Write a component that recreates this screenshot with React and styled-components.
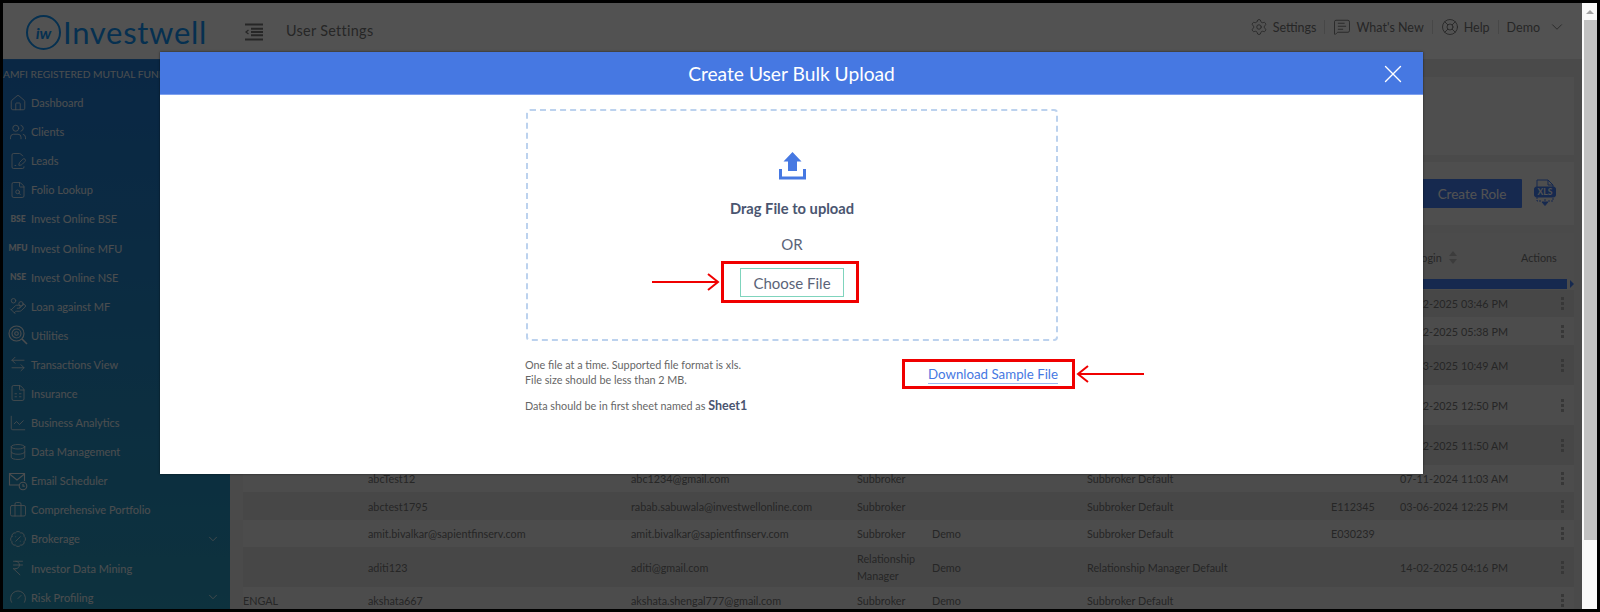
import React from "react";
import styled, { createGlobalStyle } from "styled-components";
import {
  Home,
  Users,
  FileSignature,
  FileSearch,
  HandCoins,
  ArrowLeftRight,
  FileSpreadsheet,
  LineChart,
  Database,
  Briefcase,
  BadgePercent,
  IndianRupee,
  Gauge,
  ChevronDown,
  Settings,
  MessageSquareText,
  LifeBuoy,
  X
} from "lucide-react";

const UtilitiesIcon = (props) => (
  <svg width="20" height="20" viewBox="0 0 20 20" fill="none" stroke="currentColor" strokeWidth="0.9" {...props}>
    <circle cx="8.5" cy="8.5" r="7.5" />
    <circle cx="8.5" cy="8.5" r="4.5" />
    <circle cx="8.5" cy="8.5" r="1.8" />
    <path d="m14 14 5 5" strokeWidth="1.6" />
  </svg>
);

const MailClockIcon = (props) => (
  <svg width="20" height="20" viewBox="0 0 20 20" fill="none" stroke="currentColor" strokeWidth="0.9" {...props}>
    <path d="M11 14H1.5V2.5h15V10" />
    <path d="m1.5 3 7.5 6 7.5-6" />
    <circle cx="15" cy="15" r="3.8" />
    <path d="M15 13v2.2h1.8" />
  </svg>
);

const menu = [
  { label: "Dashboard", icon: Home },
  { label: "Clients", icon: Users },
  { label: "Leads", icon: FileSignature },
  { label: "Folio Lookup", icon: FileSearch },
  { label: "Invest Online BSE", tag: "BSE" },
  { label: "Invest Online MFU", tag: "MFU" },
  { label: "Invest Online NSE", tag: "NSE" },
  { label: "Loan against MF", icon: HandCoins },
  { label: "Utilities", icon: UtilitiesIcon },
  { label: "Transactions View", icon: ArrowLeftRight },
  { label: "Insurance", icon: FileSpreadsheet },
  { label: "Business Analytics", icon: LineChart },
  { label: "Data Management", icon: Database },
  { label: "Email Scheduler", icon: MailClockIcon },
  { label: "Comprehensive Portfolio", icon: Briefcase },
  { label: "Brokerage", icon: BadgePercent, more: true },
  { label: "Investor Data Mining", icon: IndianRupee },
  { label: "Risk Profiling", icon: Gauge, more: true }
];

const rows = [
  { h: 27, date: "12-02-2025 03:46 PM" },
  { h: 28, date: "12-02-2025 05:38 PM" },
  { h: 40, date: "11-03-2025 10:49 AM" },
  { h: 40, date: "12-02-2025 12:50 PM" },
  { h: 40, date: "12-02-2025 11:50 AM" },
  {
    h: 27,
    user: "abcTest12",
    mail: "abc1234@gmail.com",
    type: "Subbroker",
    role: "Subbroker Default",
    date: "07-11-2024 11:03 AM"
  },
  {
    h: 28,
    user: "abctest1795",
    mail: "rabab.sabuwala@investwellonline.com",
    type: "Subbroker",
    role: "Subbroker Default",
    code: "E112345",
    date: "03-06-2024 12:25 PM"
  },
  {
    h: 27,
    user: "amit.bivalkar@sapientfinserv.com",
    mail: "amit.bivalkar@sapientfinserv.com",
    type: "Subbroker",
    branch: "Demo",
    role: "Subbroker Default",
    code: "E030239"
  },
  {
    h: 40,
    user: "aditi123",
    mail: "aditi@gmail.com",
    type: "Relationship Manager",
    branch: "Demo",
    role: "Relationship Manager Default",
    date: "14-02-2025 04:16 PM"
  },
  {
    h: 27,
    name: "ENGAL",
    user: "akshata667",
    mail: "akshata.shengal777@gmail.com",
    type: "Subbroker",
    branch: "Demo",
    role: "Subbroker Default"
  }
];

const GlobalStyle = createGlobalStyle`
  html, body {
    margin: 0;
    padding: 0;
    background: #000;
    font-family: "Lato", "Liberation Sans", sans-serif;
  }
  * {
    box-sizing: border-box;
  }
`;

const Frame = styled.div`
  width: 1600px;
  height: 612px;
  padding: 3px;
  background: #000;
`;

const Screen = styled.div`
  position: relative;
  display: flex;
  width: 100%;
  height: 100%;
  overflow: hidden;
  background: #fff;
`;

const Page = styled.div`
  position: relative;
  flex: 1;
  display: flex;
  flex-direction: column;
  min-width: 0;
`;

const Scrollbar = styled.div`
  width: 15px;
  display: flex;
  flex-direction: column;
  background: #fafafa;
`;

const ScrollArrow = styled.div`
  height: 17px;
  display: flex;
  justify-content: center;
  align-items: center;

  &::before {
    content: "";
    border-left: 4px solid transparent;
    border-right: 4px solid transparent;
    border-bottom: 4px solid #a3a3a3;
  }
`;

const ScrollThumb = styled.div`
  height: 520px;
  margin-left: 2px;
  background: #c1c1c1;
`;

const Header = styled.header`
  height: 56px;
  flex-shrink: 0;
  display: flex;
  align-items: center;
  padding: 0 16px 0 23px;
  background: #fff;
  color: #777;
`;

const Logo = styled.div`
  display: flex;
  align-items: center;
  width: 218px;
  margin-top: 2px;
  color: #1396f7;
`;

const LogoMark = styled.div`
  width: 35px;
  height: 35px;
  margin-right: 2px;
  flex-shrink: 0;
  display: flex;
  align-items: center;
  justify-content: center;
  border: 2.5px solid #1396f7;
  border-radius: 50%;
  font-size: 16px;
  font-weight: 700;
  font-style: italic;
`;

const LogoName = styled.div`
  font-size: 31px;
  letter-spacing: 0.7px;
`;

const Toggle = styled.svg`
  margin-top: 2px;
  flex-shrink: 0;
`;

const PageTitle = styled.div`
  margin: 0 0 2px 22px;
  font-size: 14.4px;
  letter-spacing: 0.3px;
`;

const HeaderLinks = styled.div`
  margin: 0 0 8px auto;
  display: flex;
  align-items: center;
  font-size: 12.5px;
`;

const HeaderLink = styled.div`
  display: flex;
  align-items: center;
  gap: 5px;
  padding: ${(p) => (p.$last ? "0 0 0 8px" : "0 8px")};
  height: 14px;
  border-right: ${(p) => (p.$last ? "none" : "1px solid #ddd")};
`;

const Body = styled.div`
  flex: 1;
  display: flex;
  min-height: 0;
`;

const Sidebar = styled.nav`
  width: 227px;
  flex-shrink: 0;
  background: linear-gradient(180deg, #1f7ad4, #2a9bc0);
  color: #e8f0f5;
  border-top: 1px solid #2f86dd;
`;

const Amfi = styled.div`
  height: 28px;
  padding-top: 6px;
  font-size: 10.2px;
  line-height: 16px;
  white-space: nowrap;
`;

const MenuRow = styled.div`
  height: 29.1px;
  display: flex;
  align-items: center;
  padding: 0 10px 0 5px;
  font-size: 11px;
`;

const MenuIcon = styled.div`
  width: 20px;
  margin-right: 3px;
  display: flex;
  justify-content: center;
  font-size: 8.5px;
  font-weight: 900;
`;

const MenuLabel = styled.span`
  flex: 1;
`;

const Main = styled.main`
  flex: 1;
  min-width: 0;
  display: flex;
  flex-direction: column;
  padding: 18px 0 0 13px;
  background: #e6e6e6;
`;

const InfoCard = styled.div`
  height: 78px;
  flex-shrink: 0;
  margin-bottom: 7px;
  width: 1331px;
  background: #f2f2f2;
`;

const Toolbar = styled.div`
  height: 63px;
  flex-shrink: 0;
  width: 1331px;
  margin-bottom: 1px;
  display: flex;
  justify-content: flex-end;
  align-items: flex-start;
  gap: 12px;
  padding: 17px 18px 0 0;
  background: #f2f2f2;
`;

const CreateRole = styled.div`
  width: 100px;
  height: 29px;
  display: flex;
  align-items: center;
  justify-content: center;
  background: #4680f5;
  border-radius: 1px;
  color: #fff;
  font-size: 13.5px;
`;

const Table = styled.div`
  width: 1331px;
  padding-top: 7px;
  font-size: 10.8px;
  color: #777;
`;

const Grid = styled.div`
  display: grid;
  grid-template-columns: 125px 263px 226px 75px 155px 244px 69px 150px 24px;
  align-items: center;
`;

const HeadRow = styled(Grid)`
  height: 46px;
  padding-top: 2px;
  background: #e8e8e8;
`;

const StripRow = styled.div`
  display: flex;
  align-items: center;
  gap: 3px;
  height: 11px;
  padding-bottom: 1px;
  background: #e8e8e8;
`;

const Strip = styled.div`
  flex: 1;
  height: 10px;
  background: #4680f5;
`;

const StripArrow = styled.div`
  border-top: 4px solid transparent;
  border-bottom: 4px solid transparent;
  border-left: 4px solid #4680f5;
`;

const Row = styled(Grid)`
  height: ${(p) => p.$h}px;
  background: ${(p) => (p.$odd ? "#ececec" : "#dddddd")};
`;

const Cell = styled.div`
  line-height: 17px;
  white-space: ${(p) => (p.$wrap ? "normal" : "nowrap")};
`;

const LoginHead = styled(Cell)`
  display: flex;
  align-items: center;
  gap: 7px;
  margin-left: -6px;
`;

const HeadActions = styled.div`
  margin-left: -29px;
`;

const Sort = styled.span`
  display: flex;
  flex-direction: column;
  gap: 3px;

  &::before,
  &::after {
    content: "";
    border-left: 4.5px solid transparent;
    border-right: 4.5px solid transparent;
  }
  &::before {
    border-bottom: 5px solid #bbb;
  }
  &::after {
    border-top: 5px solid #bbb;
  }
`;

const Dots = styled.div`
  display: flex;
  flex-direction: column;
  gap: 2px;
  align-items: center;

  span {
    width: 3px;
    height: 3px;
    background: #aaa;
  }
`;

const Backdrop = styled.div`
  position: absolute;
  inset: 0;
  background: rgba(0, 0, 0, 0.68);
`;

const Modal = styled.section`
  position: absolute;
  left: 157px;
  top: 49px;
  width: 1263px;
  height: 422px;
  display: flex;
  flex-direction: column;
  background: #fff;
  box-shadow: 0 0 2px rgba(0, 0, 0, 0.6);
`;

const ModalHeader = styled.div`
  position: relative;
  height: 43px;
  flex-shrink: 0;
  display: flex;
  align-items: center;
  justify-content: center;
  background: #4678e2;
  border-bottom: 1px solid #7ea0ee;
  color: #fff;
  font-size: 19.2px;
`;

const Close = styled.div`
  position: absolute;
  right: 15px;
  top: 7px;
  display: flex;
`;

const ModalBody = styled.div`
  display: flex;
  flex-direction: column;
  align-items: flex-start;
  padding: 14px 0 0 365px;
`;

const DropZone = styled.div`
  width: 532px;
  height: 232px;
  margin-left: 1px;
  display: flex;
  flex-direction: column;
  align-items: center;
  padding-top: 41px;
  border: 2px dashed #bcd2ee;
  border-radius: 4px;
  color: #4a5570;
`;

const DropTitle = styled.div`
  margin-top: 18px;
  font-size: 14.7px;
  font-weight: 700;
  line-height: 20px;
`;

const DropOr = styled.div`
  margin-top: 16px;
  font-size: 15px;
  line-height: 20px;
  color: #5b6478;
`;

const Callout = styled.div`
  position: relative;
  margin-top: 14px;
`;

const ChooseButton = styled.div`
  width: 104px;
  height: 29px;
  display: flex;
  align-items: center;
  justify-content: center;
  border: 1px solid #7fd4bd;
  color: #5b6478;
  font-size: 15px;
`;

const RedBox = styled.div`
  position: absolute;
  left: ${(p) => p.$left}px;
  right: ${(p) => p.$right}px;
  top: ${(p) => p.$top}px;
  bottom: ${(p) => p.$bottom}px;
  border: 3px solid #f00000;
`;

const RedArrow = styled.svg`
  position: absolute;
  left: ${(p) => p.$left}px;
  top: ${(p) => p.$top}px;
`;

const Footer = styled.div`
  width: 533px;
  display: flex;
  justify-content: space-between;
  margin-top: 16px;
`;

const Notes = styled.div`
  font-size: 10.8px;
  line-height: 15px;
  color: #666;
`;

const NoteGap = styled.div`
  margin-top: 11px;
`;

const SheetName = styled.b`
  font-size: 12.5px;
  color: #4a5570;
`;

const DownloadLink = styled.a`
  position: relative;
  align-self: flex-start;
  margin-top: 8px;
  color: #4678e2;
  font-size: 13.3px;
  line-height: 18px;
  border-bottom: 1px solid #9db8f0;
`;

const ToggleIcon = () => (
  <Toggle width="20" height="18" viewBox="0 0 20 18" fill="none" stroke="#777" strokeWidth="2">
    <path d="M1 1.5h18M7 5.8h12M7 9h12M7 12.2h12M1 16.5h18" />
    <path d="M4.5 7 2 9l2.5 2" strokeWidth="1.3" />
  </Toggle>
);

const XlsIcon = () => (
  <svg width="22" height="27" viewBox="0 0 22 27" fill="none" stroke="#4680f5" strokeWidth="1">
    <path d="M3 8V1h11l5 5v2M14 1v5h5" />
    <rect x="0.5" y="8" width="21" height="10" rx="2" fill="#4680f5" />
    <text x="11" y="16" textAnchor="middle" fill="#fff" stroke="none" fontSize="8.5" fontWeight="700" fontFamily="Lato">
      XLS
    </text>
    <path d="M3 18v4h5M14 22h5v-4M11 20v4" strokeDasharray="2 1" />
    <path d="m8 23 3 3.5 3-3.5z" fill="#4680f5" />
  </svg>
);

const UploadIcon = () => (
  <svg width="27" height="28" viewBox="0 0 27 28">
    <path d="M13.5 0 22.5 9.5H18V19H9V9.5H4.5z" fill="#4678e2" />
    <path d="M1.5 17v9h24v-9" fill="none" stroke="#4678e2" strokeWidth="3" />
  </svg>
);

const ArrowRight = ({ left, top }) => (
  <RedArrow $left={left} $top={top} width="68" height="18" viewBox="0 0 68 18" fill="none" stroke="#f00000" strokeWidth="2">
    <path d="M0 9h66M56 1l10 8-10 8" />
  </RedArrow>
);

const ArrowLeft = ({ left, top }) => (
  <RedArrow $left={left} $top={top} width="68" height="18" viewBox="0 0 68 18" fill="none" stroke="#f00000" strokeWidth="2">
    <path d="M68 9H2M12 1 2 9l10 8" />
  </RedArrow>
);

const App = () => (
  <Frame>
    <GlobalStyle />
    <Screen>
      <Page>
        <Header>
          <Logo>
            <LogoMark>iw</LogoMark>
            <LogoName>Investwell</LogoName>
          </Logo>
          <ToggleIcon />
          <PageTitle>User Settings</PageTitle>
          <HeaderLinks>
            <HeaderLink>
              <Settings size={18} strokeWidth={1.2} /> Settings
            </HeaderLink>
            <HeaderLink>
              <MessageSquareText size={18} strokeWidth={1.2} /> What's New
            </HeaderLink>
            <HeaderLink>
              <LifeBuoy size={18} strokeWidth={1.2} /> Help
            </HeaderLink>
            <HeaderLink $last>
              Demo <ChevronDown size={18} strokeWidth={1.2} style={{ marginLeft: 3 }} />
            </HeaderLink>
          </HeaderLinks>
        </Header>
        <Body>
          <Sidebar>
            <Amfi>AMFI REGISTERED MUTUAL FUND DISTRIBUTOR</Amfi>
            {menu.map((item) => (
              <MenuRow key={item.label}>
                <MenuIcon>{item.icon ? <item.icon size={18} strokeWidth={1.1} /> : item.tag}</MenuIcon>
                <MenuLabel>{item.label}</MenuLabel>
                {item.more && <ChevronDown size={14} strokeWidth={1.4} />}
              </MenuRow>
            ))}
          </Sidebar>
          <Main>
            <InfoCard />
            <Toolbar>
              <CreateRole>Create Role</CreateRole>
              <XlsIcon />
            </Toolbar>
            <Table>
              <HeadRow>
                <Cell />
                <Cell />
                <Cell />
                <Cell />
                <Cell />
                <Cell />
                <Cell />
                <LoginHead>
                  Last Login
                  <Sort />
                </LoginHead>
                <HeadActions>Actions</HeadActions>
              </HeadRow>
              <StripRow>
                <Strip />
                <StripArrow />
              </StripRow>
              {rows.map((row, index) => (
                <Row key={index} $h={row.h} $odd={index % 2 === 1}>
                  <Cell>{row.name}</Cell>
                  <Cell>{row.user}</Cell>
                  <Cell>{row.mail}</Cell>
                  <Cell $wrap>{row.type}</Cell>
                  <Cell>{row.branch}</Cell>
                  <Cell>{row.role}</Cell>
                  <Cell>{row.code}</Cell>
                  <Cell>{row.date}</Cell>
                  <Dots>
                    <span />
                    <span />
                    <span />
                  </Dots>
                </Row>
              ))}
            </Table>
          </Main>
        </Body>
        <Backdrop />
        <Modal>
          <ModalHeader>
            Create User Bulk Upload
            <Close>
              <X size={30} strokeWidth={1.1} />
            </Close>
          </ModalHeader>
          <ModalBody>
            <DropZone>
              <UploadIcon />
              <DropTitle>Drag File to upload</DropTitle>
              <DropOr>OR</DropOr>
              <Callout>
                <ChooseButton>Choose File</ChooseButton>
                <RedBox $left={-19} $right={-15} $top={-7} $bottom={-6} />
                <ArrowRight left={-88} top={5} />
              </Callout>
            </DropZone>
            <Footer>
              <Notes>
                One file at a time. Supported file format is xls.
                <br />
                File size should be less than 2 MB.
                <NoteGap>
                  Data should be in first sheet named as <SheetName>Sheet1</SheetName>
                </NoteGap>
              </Notes>
              <DownloadLink>
                Download Sample File
                <RedBox $left={-26} $right={-17} $top={-6} $bottom={-6} />
                <ArrowLeft left={148} top={0} />
              </DownloadLink>
            </Footer>
          </ModalBody>
        </Modal>
      </Page>
      <Scrollbar>
        <ScrollArrow />
        <ScrollThumb />
      </Scrollbar>
    </Screen>
  </Frame>
);

export default App;
